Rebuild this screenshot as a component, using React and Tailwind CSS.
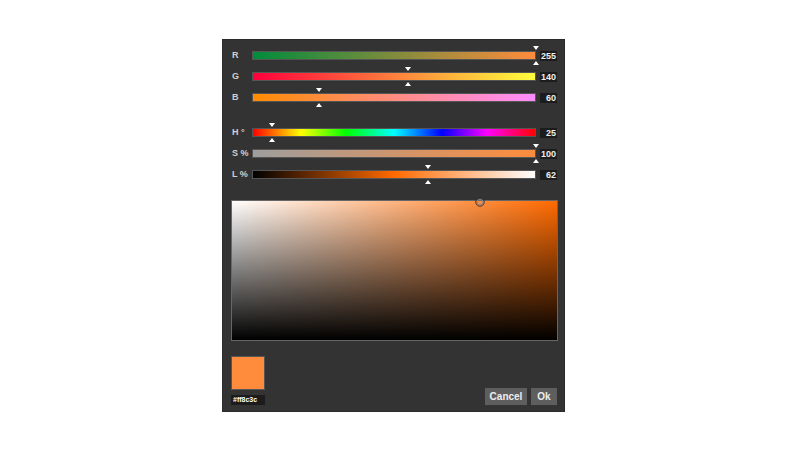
import React from "react";

const rows = [
  { label: "R", value: 255, max: 255, bg: "linear-gradient(to right, rgb(0,140,60), rgb(255,140,60))" },
  { label: "G", value: 140, max: 255, bg: "linear-gradient(to right, rgb(255,0,60), rgb(255,255,60))" },
  { label: "B", value: 60, max: 255, bg: "linear-gradient(to right, rgb(255,140,0), rgb(255,140,255))" },
];

const hslRows = [
  {
    label: "H °",
    value: 25,
    max: 360,
    bg: "linear-gradient(to right, #ff0000, #ffff00 17%, #00ff00 33%, #00ffff 50%, #0000ff 67%, #ff00ff 83%, #ff0000)",
  },
  { label: "S %", value: 100, max: 100, bg: "linear-gradient(to right, #9e9e9e, #ff8c3c)" },
  { label: "L %", value: 62, max: 100, bg: "linear-gradient(to right, #000000, #ff6a00 50%, #ffffff)" },
];

function SliderRow({ row }) {
  const pct = (row.value / row.max) * 100;
  return (
    <div className="flex items-center h-[21px]">
      <span className="w-[20px] text-[9px] font-bold text-[#d0d0d0] leading-none">{row.label}</span>
      <div className="relative w-[286px] h-[9px]">
        <div className="w-full h-full border border-[#555]" style={{ background: row.bg }} />
        {/* markers */}
        <div
          className="absolute top-[-5px] w-0 h-0 border-l-[3px] border-r-[3px] border-t-[4px] border-l-transparent border-r-transparent border-t-white"
          style={{ left: `calc(${pct}% - 3px)` }}
        />
        <div
          className="absolute bottom-[-5px] w-0 h-0 border-l-[3px] border-r-[3px] border-b-[4px] border-l-transparent border-r-transparent border-b-white"
          style={{ left: `calc(${pct}% - 3px)` }}
        />
      </div>
      <div className="ml-[4px] w-[17px] h-[10px] bg-[#1c1c1c] text-[#eee] text-[9px] font-bold leading-[10px] text-right pr-[1px]">
        {row.value}
      </div>
    </div>
  );
}

export default function App() {
  return (
    <div
      className="min-h-screen bg-white pt-[39px] pl-[222px]"
      style={{ fontFamily: '"Liberation Sans", Arial, sans-serif' }}
    >
      <div className="w-[343px] h-[373px] bg-[#333333] border border-[#2a2a2a] pl-[8px] pr-[7px] pt-[5px] flex flex-col">
        <div className="pl-[1px]">
          {rows.map((r) => (
            <SliderRow key={r.label} row={r} />
          ))}
          <div className="h-[14px]" />
          {hslRows.map((r) => (
            <SliderRow key={r.label} row={r} />
          ))}
        </div>

        {/* saturation / lightness area */}
        <div
          className="relative mt-[15px] w-[327px] h-[141px] border border-[#666]"
          style={{
            background:
              "linear-gradient(to bottom, rgba(0,0,0,0), #000000), linear-gradient(to right, #ffffff, #ff6a00)",
          }}
        >
          <svg className="absolute left-[243px] top-[-4px]" width="10" height="10" viewBox="0 0 10 10">
            <circle cx="5" cy="5" r="4.2" fill="none" stroke="#333" strokeWidth="1" />
            <circle cx="5" cy="5" r="2.8" fill="none" stroke="#888" strokeWidth="1" />
          </svg>
        </div>

        <div className="mt-[15px] flex items-end justify-between">
          <div className="flex flex-col">
            <div className="w-[34px] h-[34px] bg-[#ff8c3c] border border-[#555]" />
            <div className="mt-[5px] w-[34px] h-[10px] bg-[#1c1c1c] text-white text-[7px] font-bold leading-[10px] pl-[2px]">
              #ff8c3c
            </div>
          </div>
          <div className="flex gap-[4px]">
            <button className="w-[42px] h-[17px] bg-[#5e5e5e] text-[#eee] text-[10px] font-bold leading-none">
              Cancel
            </button>
            <button className="w-[26px] h-[17px] bg-[#5e5e5e] text-[#eee] text-[10px] font-bold leading-none">
              Ok
            </button>
          </div>
        </div>
      </div>
    </div>
  );
}
